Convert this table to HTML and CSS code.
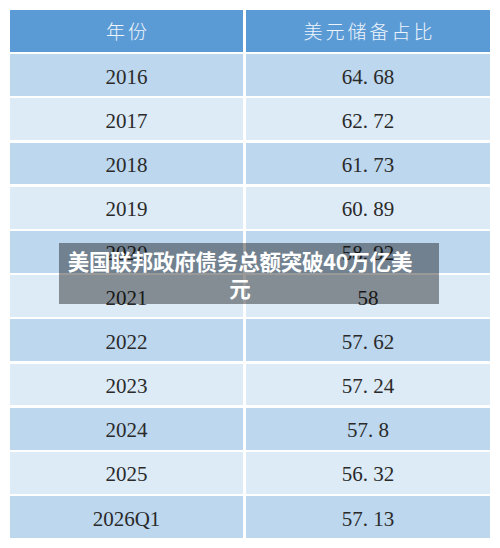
FILE: index.html
```html
<!DOCTYPE html>
<html lang="zh">
<head>
<meta charset="utf-8">
<link rel="stylesheet" href="styles.css">
</head>
<body>
<div class="page">
  <div class="table">
    <div class="cell head">年份</div><div class="cell head">美元储备占比</div>
    <div class="cell odd">2016</div><div class="cell odd">64<span class="dot">.</span>68</div>
    <div class="cell even">2017</div><div class="cell even">62<span class="dot">.</span>72</div>
    <div class="cell odd">2018</div><div class="cell odd">61<span class="dot">.</span>73</div>
    <div class="cell even">2019</div><div class="cell even">60<span class="dot">.</span>89</div>
    <div class="cell odd">2020</div><div class="cell odd">58<span class="dot">.</span>92</div>
    <div class="cell even">2021</div><div class="cell even">58</div>
    <div class="cell odd">2022</div><div class="cell odd">57<span class="dot">.</span>62</div>
    <div class="cell even">2023</div><div class="cell even">57<span class="dot">.</span>24</div>
    <div class="cell odd">2024</div><div class="cell odd">57<span class="dot">.</span>8</div>
    <div class="cell even">2025</div><div class="cell even">56<span class="dot">.</span>32</div>
    <div class="cell odd">2026Q1</div><div class="cell odd">57<span class="dot">.</span>13</div>
  </div>
  <div class="caption"><p>美国联邦政府债务总额突破40万亿美元</p></div>
</div>
</body>
</html>
```

FILE: styles.css
```css
html, body {
  margin: 0;
  padding: 0;
  background: #ffffff;
}
.page {
  position: relative;
  width: 500px;
  height: 548px;
  padding: 10px;
  box-sizing: border-box;
}
.table {
  display: grid;
  grid-template-columns: 233px 244px;
  grid-template-rows: repeat(12, 1fr);
  column-gap: 3px;
  row-gap: 2.5px;
  width: 480px;
  height: 528px;
}
.cell {
  display: flex;
  align-items: center;
  justify-content: center;
  font-family: "Liberation Serif", "Noto Sans CJK SC", serif;
  font-size: 21px;
  color: #2a2a2a;
  padding-top: 4px;
  box-sizing: border-box;
}
.head {
  background: #5b9bd5;
  color: #eef4fb;
  font-family: "Noto Sans CJK SC", sans-serif;
  font-weight: 300;
  font-size: 19px;
  letter-spacing: 3px;
  text-indent: 3px;
  padding-top: 0;
}
.odd {
  background: #bdd7ee;
}
.even {
  background: #ddebf7;
}
.dot {
  display: inline-block;
  width: 0.5em;
  text-align: left;
}
.caption {
  position: absolute;
  left: 59px;
  top: 243px;
  width: 380px;
  height: 61px;
  box-sizing: border-box;
  padding: 0 22px 0 4px;
  background: rgba(0, 0, 0, 0.4);
  display: flex;
  align-items: center;
}
.caption p {
  margin: 0;
  width: 100%;
  text-align: center;
  font-family: "Noto Sans CJK SC", sans-serif;
  font-weight: 700;
  font-size: 21.5px;
  letter-spacing: -0.2px;
  line-height: 27px;
  color: #ffffff;
}
```
